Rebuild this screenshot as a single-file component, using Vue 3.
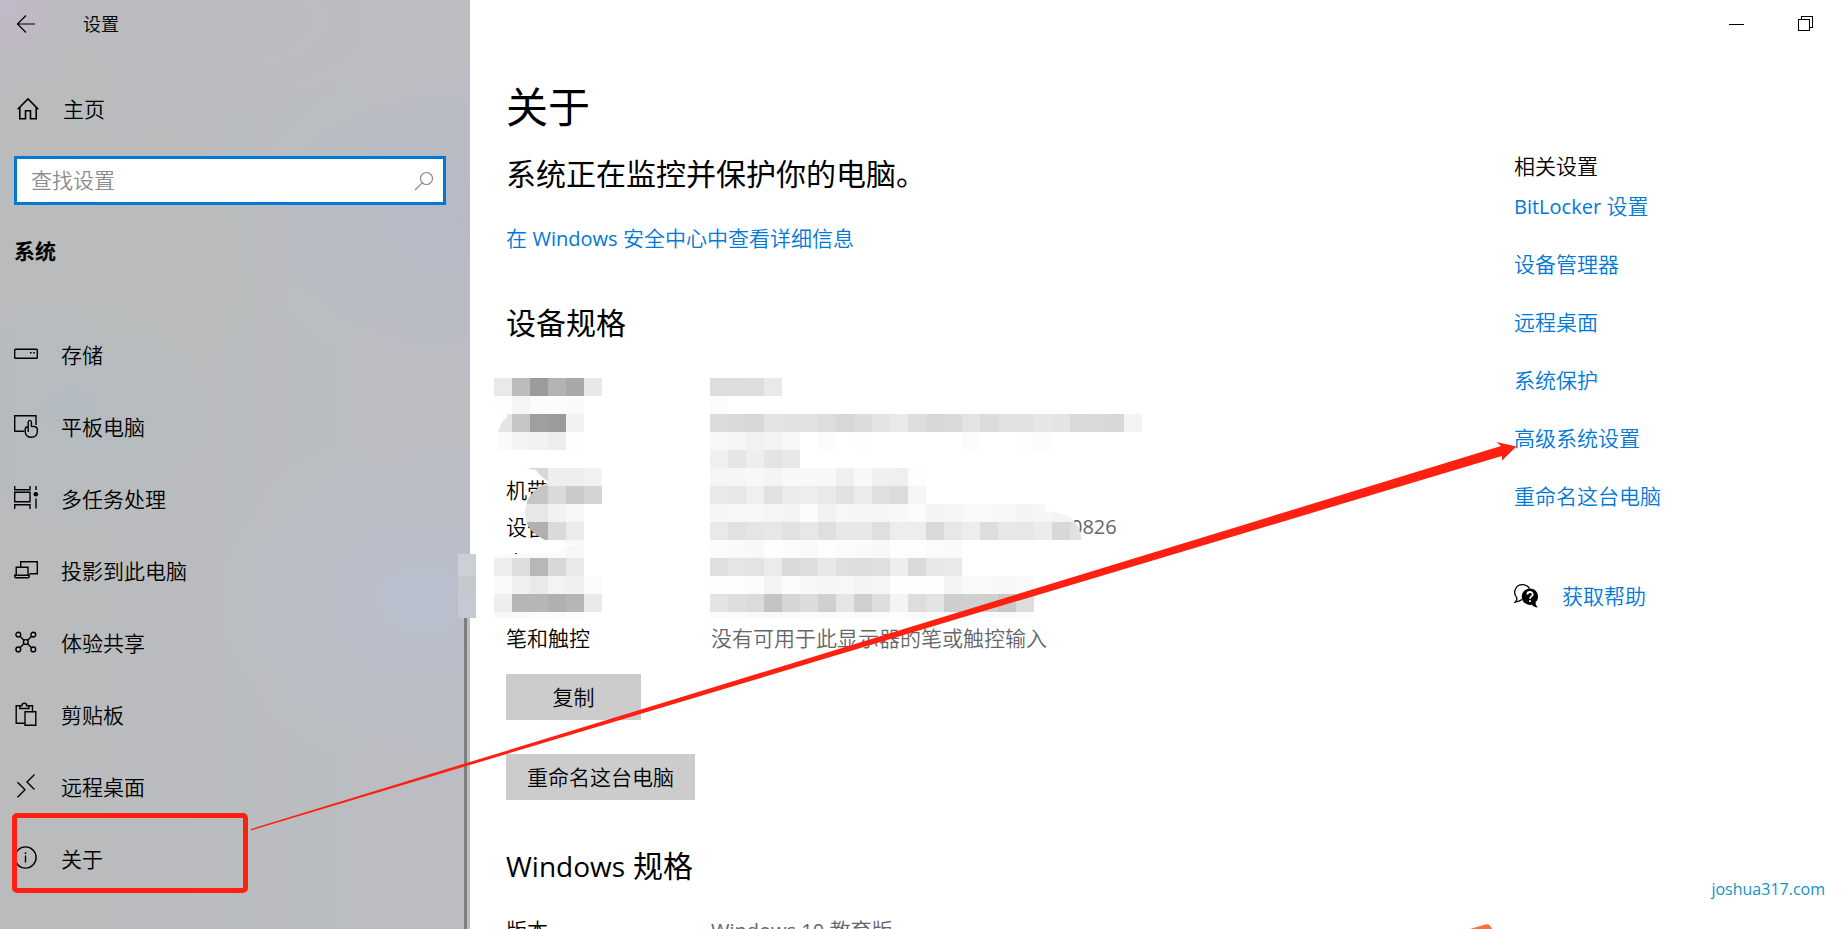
<script setup>
import { ref } from 'vue'

const query = ref('')

const navItems = [
  { label: '存储', icon: 'storage' },
  { label: '平板电脑', icon: 'tablet' },
  { label: '多任务处理', icon: 'multitask' },
  { label: '投影到此电脑', icon: 'project' },
  { label: '体验共享', icon: 'share' },
  { label: '剪贴板', icon: 'clipboard' },
  { label: '远程桌面', icon: 'remote' },
  { label: '关于', icon: 'info' },
]

const relatedLinks = ['设备管理器', '远程桌面', '系统保护', '高级系统设置', '重命名这台电脑']

// Grey levels of the mosaic, one row per 18px band; "--" leaves a gap.
const bands = [
  { y: 378, left: 'e9 bc 9b b3 a8 e8', right: 'dd dd de e9' },
  { y: 396, left: 'fd f5 fc fc fa', right: 'fb' },
  { y: 414, left: 'e4 c5 9f 9b f2', right: 'dc d9 d7 e3 e2 e2 dd d7 dc e4 e9 de d8 da e3 db e1 e2 e6 e4 d9 da d8 f4' },
  { y: 432, left: 'fa f3 f2 ed fd', right: 'f8 f5 f1 f3 f7 -- fc -- fd -- -- -- -- -- fc -- -- fd fb' },
  { y: 450, left: '', right: 'f0 e5 ee e4 e7' },
  { y: 468, left: '-- f8 d8 ee ee f2', right: 'f5 f6 f8 f4 f8 f8 f8 f0 f8 f0 ef fd' },
  { y: 486, left: '-- c5 c5 da ca d4', right: 'e9 e7 ef e1 eb ed e9 e2 eb df db f5' },
  { y: 504, left: '-- e7 e7 f2 f7', right: 'f6 f8 f8 f5 f4 fc f2 f7 f5 f6 f8 fb f4 f6 f9 f9 f7 f4 f6 f4 f4' },
  { y: 522, left: '-- b0 b0 da eb', right: 'e9 e1 e5 e7 e1 e7 df e7 e8 df ed ed d9 e7 ed dd e7 e7 ec d8 e1' },
  { y: 540, left: 'fb f9 f9 fb f8', right: 'fc fa f8 fe fc fa fd fb fa f8 fe fe fb fa' },
  { y: 558, left: 'ee dd b7 d7 e9', right: 'df e5 e3 eb da de e8 df dd df ee da e7 e9' },
  { y: 576, left: 'fa f0 e9 f3 f0 fb', right: 'fe fd fc f4 fb f7 f6 f7 f4 f5 fe fe fe f4 f9 f9 f7 fa' },
  { y: 594, left: 'ee b6 b6 b0 b6 ea', right: 'e4 de db c4 d6 dc d0 e5 cf dd f4 dd e4 ce d0 cf c9 de' },
  { y: 612, left: 'f8 f8 fc fb fc', right: 'fa fb f9 f8 fa fb f9 fb fa fb fd f9 fb f8 f9 fa f9 fc' },
]

function cells(side, startX) {
  return bands.flatMap((band) =>
    band[side]
      .split(' ')
      .map((g, i) => ({
        x: startX + i * 18,
        y: band.y,
        h: band.y === 612 ? 6 : 18,
        fill: `#${g}${g}${g}`,
        on: g !== '' && g !== '--',
      }))
      .filter((c) => c.on),
  )
}

const leftCells = cells('left', 494)
const rightCells = cells('right', 710)
</script>

<template>
  <div class="window">
    <aside class="sidebar">
      <header class="side-head">
        <button class="back" type="button" aria-label="返回">
          <svg width="20" height="20" viewBox="0 0 20 20"><path d="M19 10H1.5M10 1.5L1.5 10L10 18.5" /></svg>
        </button>
        <span class="app-name">设置</span>
      </header>

      <a class="home" href="#home">
        <svg width="22" height="24" viewBox="0 0 22 24">
          <path d="M0.7 12.2L11 2L21.3 12.2M2.8 10.5V21.7H8.5V13.7H13.5V21.7H19.2V10.5" stroke-width="1.6" />
        </svg>
        <span>主页</span>
      </a>

      <form class="search" @submit.prevent>
        <input v-model="query" type="text" placeholder="查找设置" aria-label="查找设置" />
        <button type="submit" aria-label="搜索">
          <svg width="20" height="20" viewBox="0 0 20 20"><circle cx="12.5" cy="7.5" r="6" /><path d="M8.2 11.8L1 19" /></svg>
        </button>
      </form>

      <h2 class="group">系统</h2>

      <nav class="nav">
        <a v-for="item in navItems" :key="item.icon" class="nav-item" :href="'#' + item.icon">
          <svg width="24" height="24" viewBox="0 0 24 24">
            <g v-if="item.icon === 'storage'">
              <rect x="0.7" y="6.2" width="22.6" height="9" rx="0.8" />
              <path class="solid" d="M16 9h1.6v1.6H16zM19.2 9h1.6v1.6h-1.6z" />
            </g>
            <g v-else-if="item.icon === 'tablet'">
              <path d="M10.5 16.3H0.7V0.7H22V10" />
              <path d="M14.2 17V7.2C14.2 4.8 17.4 4.8 17.4 7.2V11.3C20.5 11.3 23.3 11.5 23.3 14V16.5C23.3 20.5 20.6 22.3 17.3 22.3C13.6 22.3 11.2 19.8 11.2 16.5V14C11.2 12.4 12.2 11.7 14.2 11.7" />
            </g>
            <g v-else-if="item.icon === 'multitask'">
              <path d="M0.7 -1V2.7H16V-1M0.7 22V17.7H16V22M0.7 5.2H16V14.8H0.7ZM22 -1V3M22 11.5V21.5" />
              <circle class="solid" cx="21.8" cy="7.3" r="2.3" />
            </g>
            <g v-else-if="item.icon === 'project'">
              <path d="M6.7 8V2.7H23.3V14.7H15.5M2.2 16V8.2H14V16M0.7 16.2H15.3V17.2Q15.3 18.7 13.8 18.7H2.2Q0.7 18.7 0.7 17.2Z" />
            </g>
            <g v-else-if="item.icon === 'share'">
              <circle cx="4.3" cy="3.6" r="2.4" /><circle cx="19.3" cy="3.6" r="2.4" />
              <circle cx="4.3" cy="18.4" r="2.4" /><circle cx="19.3" cy="18.4" r="2.4" />
              <circle cx="11.8" cy="11" r="2.4" />
              <path d="M6 5.3L10 9.2M17.6 5.3L13.6 9.2M6 16.7L10 12.8M17.6 16.7L13.6 12.8" />
            </g>
            <g v-else-if="item.icon === 'clipboard'">
              <path d="M10.5 20.3H2.2V2.7H6.5M14 2.7H18.5V8M5.8 5.5V2.7H7.8C8 -0.6 12.6 -0.6 12.8 2.7H15V5.5ZM11 8.7H21.8V22.3H11Z" />
            </g>
            <g v-else-if="item.icon === 'remote'">
              <path d="M3.5 7.2L11 14.7L3.5 22.2M20.5 -0.5L13 7L20.5 14.5" />
            </g>
            <g v-else>
              <circle cx="11.5" cy="10.5" r="10.6" />
              <path d="M11.5 8.5V15.5M11.5 5.2V6.9" />
            </g>
          </svg>
          <span>{{ item.label }}</span>
        </a>
      </nav>

      <div class="scroll-thumb"></div>
    </aside>
    <div class="smudge"></div>

    <div class="body">
      <header class="titlebar">
        <button type="button" aria-label="最小化">
          <svg width="16" height="16" viewBox="0 0 16 16" shape-rendering="crispEdges"><path d="M0 8.5H15" stroke-width="1" /></svg>
        </button>
        <button type="button" aria-label="还原">
          <svg width="16" height="16" viewBox="0 0 16 16" shape-rendering="crispEdges">
            <path d="M0.5 3.5H11.5V14.5H0.5ZM3.5 3.5V0.5H14.5V11.5H11.5" stroke-width="1" />
          </svg>
        </button>
      </header>

      <div class="columns">
        <main class="content">
          <h1>关于</h1>
          <p class="lead">系统正在监控并保护你的电脑。</p>
          <p class="detail"><a href="#security">在 <span class="latin">Windows</span> 安全中心中查看详细信息</a></p>

          <h2>设备规格</h2>
          <div class="spec-wrap">
            <table class="specs">
              <tbody>
                <tr v-for="n in 3" :key="n"><th></th><td></td></tr>
                <tr><th scope="row">机带</th><td></td></tr>
                <tr><th scope="row">设备</th><td class="tail">0826</td></tr>
                <tr v-for="n in 2" :key="'b' + n"><th></th><td></td></tr>
                <tr><th scope="row">笔和触控</th><td>没有可用于此显示器的笔或触控输入</td></tr>
              </tbody>
            </table>
            <svg class="mosaic" width="670" height="258" viewBox="494 360 670 258" aria-hidden="true">
              <defs>
                <clipPath id="left-edge">
                  <path d="M494 360H602V618H494V555Q540 554 559 551.500Q566 546 576 544L548 541Q525 533 525 512Q526 491 549 482Q542 478 536 470L518 468H494V450H498Q494 427 508 416L494 403Z" />
                </clipPath>
                <clipPath id="right-edge">
                  <path d="M710 360H1160V504H1045V511.500C1066 511 1080 520 1081.500 540V618H710Z" />
                </clipPath>
              </defs>
              <g clip-path="url(#left-edge)" shape-rendering="crispEdges">
                <rect v-for="c in leftCells" :key="c.x + '-' + c.y" :x="c.x" :y="c.y" width="18" :height="c.h" :fill="c.fill" />
              </g>
              <g clip-path="url(#right-edge)" shape-rendering="crispEdges">
                <rect v-for="c in rightCells" :key="c.x + '-' + c.y" :x="c.x" :y="c.y" width="18" :height="c.h" :fill="c.fill" />
              </g>
              <rect x="515" y="553" width="2" height="1" fill="#444" />
            </svg>
          </div>

          <button class="action copy" type="button">复制</button>
          <button class="action rename" type="button">重命名这台电脑</button>

          <h2 class="win-title"><span class="latin">Windows</span> 规格</h2>
          <table class="specs">
            <tbody>
              <tr><th scope="row">版本</th><td><span class="latin">Windows 10</span> 教育版</td></tr>
            </tbody>
          </table>
        </main>

        <aside class="related">
          <h3>相关设置</h3>
          <ul>
            <li><a href="#bitlocker"><span class="latin">BitLocker</span> 设置</a></li>
            <li v-for="link in relatedLinks" :key="link"><a :href="'#' + link">{{ link }}</a></li>
          </ul>
          <a class="help" href="#help">
            <svg width="24" height="24" viewBox="0 0 24 24">
              <path d="M8 15.500C6.500 16.800 4 17.800 1 18.200C2.800 16.800 3.300 15.300 2.600 13.700C-1.500 8.500 1.500 0.700 8.500 0.700C12 0.700 14.300 2.300 15.500 4.600" fill="none" stroke="#000" stroke-width="1.300" />
              <path d="M16 4.500C20.500 4.500 24 8 24 12.500C24 15 23 17 21.500 18.500C21.500 20.500 22.500 22 23.800 23.500C21.300 23.500 19.300 22.500 18 20.800C12.500 21.700 7.700 18 7.700 12.700C7.700 8 11.400 4.500 16 4.500Z" fill="#000" />
              <path d="M13.300 10.500C13.300 7.200 18.700 7.200 18.700 10.400C18.700 12.500 16 12.300 16 14.800M16 16.300V18" fill="none" stroke="#fff" stroke-width="1.800" />
            </svg>
            <span>获取帮助</span>
          </a>
        </aside>
      </div>
    </div>

    <!-- hand-drawn annotations over the window -->
    <div class="mark-box"></div>
    <svg class="mark-arrow" width="1270" height="392" viewBox="250 440 1270 392" aria-hidden="true">
      <path d="M251 829L1501 446L1496.500 442L1516.500 446.500L1502 460.500V456L1480 462.500L251 830.500Z" fill="#ff2012" />
    </svg>
    <svg class="corner-mark" width="24" height="5" viewBox="0 0 24 5" aria-hidden="true">
      <path d="M0 5L16 0.300Q20 -0.500 22 5Z" fill="#ff6f3c" />
    </svg>
    <div class="watermark">joshua317.com</div>
  </div>
</template>

<style>
html,
body {
  margin: 0;
  overflow: hidden;
  background: #fff;
}
</style>

<style scoped>
.window {
  position: relative;
  display: flex;
  height: 100vh;
  overflow: hidden;
  background: #fff;
  color: #000;
  font-family: "Open Sans", "Noto Sans CJK SC", sans-serif;
  font-size: 21px;
  font-weight: 350;
  line-height: 28px;
}

h1,
h2,
h3,
p,
ul {
  margin: 0;
  padding: 0;
  font-weight: inherit;
  list-style: none;
}

button {
  padding: 0;
  border: 0;
  background: none;
  color: inherit;
  font: inherit;
}

a {
  color: #0078d7;
  text-decoration: none;
}

.latin {
  font-size: 20px;
  font-weight: 400;
  line-height: 1;
}

.sidebar {
  position: relative;
  flex: 0 0 470px;
  box-sizing: border-box;
  overflow: hidden;
  background:
    radial-gradient(circle at 0 0, #c2b8c8 0, rgba(194, 184, 200, 0) 90px),
    radial-gradient(ellipse 160px 90px at 240px 20px, #bdbac1 0, rgba(189, 186, 193, 0) 100%),
    radial-gradient(ellipse 220px 170px at 420px 600px, #b9bfcd 0, rgba(185, 191, 205, 0) 100%),
    radial-gradient(ellipse 240px 160px at 460px 220px, #b7bac6 0, rgba(183, 186, 198, 0) 100%),
    radial-gradient(ellipse 150px 120px at 70px 410px, #b4bbc0 0, rgba(180, 187, 192, 0) 100%),
    radial-gradient(ellipse 140px 140px at 160px 260px, #babcb9 0, rgba(186, 188, 185, 0) 100%),
    linear-gradient(90deg, #b9bbbc 0, #babdc0 65%, #bbbdc2 100%);
}

.sidebar svg,
.titlebar svg {
  display: block;
  fill: none;
  stroke: #000;
  stroke-width: 1.4;
}

.sidebar .nav-item svg {
  overflow: visible;
}

.sidebar .solid {
  fill: #000;
  stroke: none;
}

.side-head {
  display: flex;
  align-items: center;
  gap: 47px;
  height: 48px;
  padding-left: 16px;
  font-size: 18px;
}

.side-head svg {
  stroke-width: 1.2;
}

.home {
  display: flex;
  align-items: center;
  gap: 24px;
  margin-top: 47px;
  padding-left: 17px;
  color: #000;
}

.search {
  display: flex;
  align-items: center;
  height: 49px;
  box-sizing: border-box;
  margin: 33px 24px 0 14px;
  padding: 0 9px 0 14px;
  border: 3px solid #0078d7;
  background: #fff;
}

.search input {
  flex: 1;
  min-width: 0;
  height: 36px;
  padding: 0 0 2px;
  border: 0;
  outline: 0;
  background: none;
  color: #000;
  font: inherit;
}

.search input::placeholder {
  color: #8c8c8c;
  opacity: 1;
}

.search svg {
  stroke: #8a8a8a;
  stroke-width: 1.2;
}

.group {
  margin: 32px 0 0 14px;
  font-size: 21px;
  font-weight: 700;
}

.nav {
  margin-top: 54px;
}

.nav-item {
  display: flex;
  align-items: center;
  gap: 23px;
  height: 72px;
  padding-left: 14px;
  color: #000;
}

.scroll-thumb {
  position: absolute;
  top: 617px;
  right: 3px;
  bottom: 0;
  width: 3px;
  background: #7c7e80;
}

.smudge {
  position: absolute;
  top: 554px;
  left: 458px;
  width: 18px;
  height: 64px;
  background: linear-gradient(#cccfd5 0 22px, #c4c7cc 22px 40px, #c6c9d3 40px);
}

.body {
  display: flex;
  flex: 1;
  flex-direction: column;
  min-width: 0;
}

.titlebar {
  display: flex;
  flex: none;
  justify-content: flex-end;
  height: 48px;
  padding-right: 4px;
}

.titlebar button {
  display: flex;
  align-items: center;
  justify-content: center;
  width: 69px;
}

.columns {
  display: grid;
  flex: 1;
  grid-template-columns: minmax(0, 1fr) 330px;
  min-height: 0;
  padding-left: 36px;
}

.content {
  padding-top: 29px;
}

h1 {
  font-size: 42px;
  line-height: 60px;
}

.lead {
  margin-top: 17px;
  font-size: 30px;
  line-height: 40px;
}

.detail {
  margin-top: 30px;
}

.content h2 {
  margin-top: 51px;
  font-size: 30px;
  line-height: 40px;
}

.content h1,
.content .lead,
.content h2 {
  font-weight: 400;
}

.content .win-title {
  margin-top: 46px;
}

.win-title .latin {
  font-size: 28px;
}

.spec-wrap {
  position: relative;
  margin-top: 17px;
}

.specs {
  width: 100%;
  border-collapse: collapse;
  table-layout: fixed;
}

.win-title + .specs {
  margin-top: 25px;
}

.specs th,
.specs td {
  height: 37px;
  padding: 0;
  font-weight: inherit;
  text-align: left;
}

.specs th {
  width: 205px;
}

.specs td {
  color: #666;
}

.specs .tail {
  padding-left: 360px;
  font-size: 20px;
  font-weight: 400;
}

.mosaic {
  position: absolute;
  top: 0;
  left: -12px;
}

.action {
  display: block;
  height: 46px;
  padding: 0 21px;
  background: #ccc;
}

.copy {
  min-width: 135px;
  margin-top: 18px;
}

.rename {
  margin-top: 34px;
}

.related {
  padding-top: 104px;
}

.related h3 {
  font-size: 21px;
}

.related ul {
  display: grid;
  gap: 30px;
  margin-top: 12px;
}

.help {
  display: flex;
  align-items: center;
  gap: 24px;
  margin-top: 72px;
}

.mark-box {
  position: absolute;
  top: 813px;
  left: 12px;
  box-sizing: border-box;
  width: 236px;
  height: 80px;
  border: 5px solid #ff2012;
  border-radius: 5px;
}

.mark-arrow {
  position: absolute;
  top: 440px;
  left: 250px;
  pointer-events: none;
}

.corner-mark {
  position: absolute;
  bottom: 0;
  left: 1470px;
}

.watermark {
  position: absolute;
  right: 19px;
  bottom: 26px;
  color: #1294c4;
  font-size: 16px;
  font-weight: 400;
}
</style>
